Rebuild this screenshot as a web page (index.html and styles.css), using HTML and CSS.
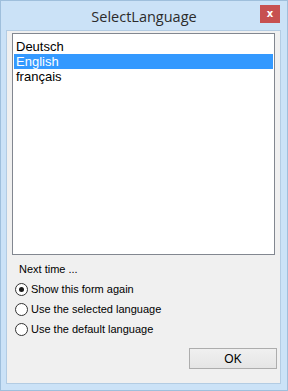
FILE: index.html
```html
<!DOCTYPE html>
<html>
	<head>
		<meta charset="utf-8">
		<title>SelectLanguage</title>
		<link rel="stylesheet" href="styles.css">
	</head>
	<body>
		<div class="window">
			<div class="titlebar">
				<span></span>
				<span class="title">SelectLanguage</span>
				<span class="close">x</span>
			</div>
			<div class="client">
				<ul class="listbox">
					<li>Deutsch</li>
					<li class="selected">English</li>
					<li>français</li>
				</ul>
				<div class="options">
					<div class="caption">Next time ...</div>
					<label class="radio"><span class="dot checked"></span>Show this form again</label>
					<label class="radio"><span class="dot"></span>Use the selected language</label>
					<label class="radio"><span class="dot"></span>Use the default language</label>
				</div>
				<div class="buttons">
					<button class="btn">OK</button>
				</div>
			</div>
		</div>
	</body>
</html>
```
FILE: styles.css
```css
*{
	margin: 0;
	padding: 0;
	box-sizing: border-box;
}
body{
	font-family: "Liberation Sans", Arial, sans-serif;
	background: #cbe2f7;
}
.window{
	width: 288px;
	height: 391px;
	background: #cbe2f7;
	border: 1px solid #9fbfdc;
	display: flex;
	flex-direction: column;
}
.titlebar{
	height: 29px;
	display: grid;
	grid-template-columns: 1fr auto 1fr;
	align-items: center;
}
.title{
	font-family: "Open Sans", sans-serif;
	font-size: 14.5px;
	color: #2b2b2b;
	padding-top: 1px;
}
.close{
	justify-self: end;
	width: 20px;
	height: 18px;
	margin-right: 7px;
	margin-top: -3px;
	background: #c75050;
	color: #fff;
	font-family: "DejaVu Sans", sans-serif;
	font-weight: bold;
	font-size: 10px;
	line-height: 17px;
	text-align: center;
}
.client{
	flex: 1;
	margin: 0 6px 6px 5px;
	background: #f0f0f0;
	border: 1px solid #b3cce3;
	padding: 2px 5px 0 5px;
	display: flex;
	flex-direction: column;
}
.listbox{
	list-style: none;
	height: 222px;
	background: #fff;
	border: 1px solid #828790;
	padding: 5px 1px 0 1px;
}
.listbox li{
	font-size: 13px;
	line-height: 15px;
	height: 15px;
	padding-left: 2px;
	color: #000;
}
.listbox li.selected{
	background: #3399ff;
	color: #fff;
}
.options{
	padding-top: 4px;
	font-size: 11px;
	color: #000;
}
.caption{
	height: 20px;
	line-height: 20px;
	padding-left: 7px;
}
.radio{
	display: flex;
	align-items: center;
	height: 20px;
	padding-left: 3px;
}
.dot{
	width: 13px;
	height: 13px;
	border: 1px solid #333;
	border-radius: 50%;
	background: #fff;
	margin-right: 3px;
	display: flex;
	align-items: center;
	justify-content: center;
}
.dot.checked::after{
	content: "";
	width: 5px;
	height: 5px;
	border-radius: 50%;
	background: #1a1a1a;
}
.buttons{
	margin-top: auto;
	display: flex;
	justify-content: flex-end;
	padding: 0 0 14px 0;
}
.btn{
	width: 88px;
	height: 21px;
	margin-right: -2px;
	border: 1px solid #adadad;
	background: linear-gradient(#f0f0f0, #e5e5e5);
	font-family: "Liberation Sans", Arial, sans-serif;
	font-size: 12px;
	color: #000;
}
```
